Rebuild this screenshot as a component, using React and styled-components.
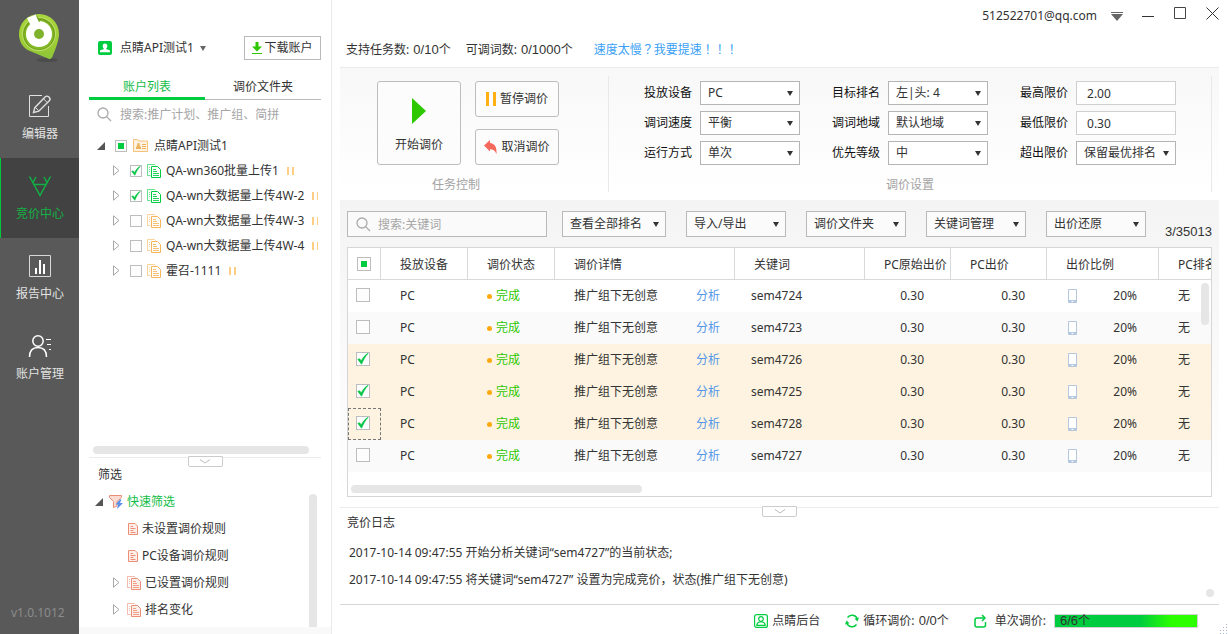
import { useState } from "react";
import styled, { createGlobalStyle } from "styled-components";

const GlobalStyle = createGlobalStyle`
  * {
    box-sizing: border-box;
  }
  body {
    margin: 0;
    background: #fff;
  }
  body, button, input, select {
    font-family: "Noto Sans", "Noto Sans CJK SC", sans-serif;
    font-size: 12px;
    line-height: 16px;
    color: #333;
  }
  button {
    padding: 0;
    border: none;
    background: none;
  }
  a {
    text-decoration: none;
  }
  svg {
    display: block;
    flex: none;
  }
`;

const Window = styled.div`
  display: flex;
  height: 100vh;
  overflow: hidden;
`;

/* ---------- sidebar ---------- */

const Sidebar = styled.nav`
  display: flex;
  flex-direction: column;
  flex: none;
  width: 79px;
  background: #595959;
`;

const LogoBox = styled.div`
  height: 78px;
  padding: 13px 0 0 18px;
`;

const NavButton = styled.button`
  display: flex;
  flex-direction: column;
  align-items: center;
  gap: 8px;
  height: 80px;
  padding: 16px 0 0;
  border-left: 1px solid ${(p) => (p.$active ? "#00c73c" : "transparent")};
  background: ${(p) => (p.$active ? "#424242" : "transparent")};
  color: ${(p) => (p.$active ? "#12b144" : "#e2e2e2")};
`;

const Version = styled.div`
  margin-top: auto;
  padding: 0 0 13px 11px;
  color: #8c8c8c;
`;

/* ---------- account panel ---------- */

const Panel = styled.aside`
  display: flex;
  flex-direction: column;
  flex: none;
  width: 253px;
  border-right: 1px solid #ebebeb;
`;

const PanelBody = styled.div`
  display: flex;
  flex-direction: column;
  flex: 1;
  min-height: 0;
  padding: 0 10px;
`;

const AccountRow = styled.div`
  display: flex;
  align-items: center;
  gap: 8px;
  padding: 36px 0 0 9px;
`;

const AccountButton = styled.button`
  display: flex;
  align-items: center;
  gap: 6px;
  white-space: nowrap;
`;

const DownloadButton = styled.button`
  display: flex;
  align-items: center;
  justify-content: center;
  gap: 2px;
  width: 77px;
  height: 24px;
  margin-left: auto;
  border: 1px solid #b9b9b9;
`;

const Tabs = styled.div`
  display: flex;
  margin-top: 12px;
`;

const Tab = styled.button`
  flex: 1;
  height: 28px;
  padding: 4px 0 ${(p) => (p.$active ? 0 : 2)}px;
  border-bottom: ${(p) => (p.$active ? "3px solid #00cc3f" : "1px solid #bbb")};
  color: ${(p) => (p.$active ? "#12bd48" : "#333")};
`;

const PanelSearch = styled.label`
  display: flex;
  align-items: center;
  gap: 8px;
  height: 28px;
  padding-left: 8px;
`;

const PlainInput = styled.input`
  flex: 1;
  min-width: 0;
  padding: 2px 0 0;
  border: none;
  outline: none;
  background: none;
  &::placeholder {
    color: #a6a6a6;
  }
`;

const Tree = styled.div`
  flex: 1;
  min-height: 0;
  margin-right: 3px;
  padding: 5px 0 0 8px;
  overflow: hidden;
`;

const TreeRow = styled.div`
  display: flex;
  align-items: center;
  gap: ${(p) => (p.$child ? "5px" : "6px")};
  height: 25px;
  padding-left: ${(p) => (p.$child ? "16px" : "0")};
  white-space: nowrap;
`;

const PlanName = styled.span`
  flex: none;
  padding-right: 3px;
`;

const Toggle = styled.button`
  display: flex;
  flex: none;
  justify-content: flex-start;
  width: ${(p) => p.$w || 12}px;
`;

const HScroll = styled.div`
  width: ${(p) => p.$width};
  height: 8px;
  margin: ${(p) => p.$margin};
  flex: none;
  border-radius: 4px;
  background: #e6e6e6;
`;

const Splitter = styled.div`
  display: flex;
  justify-content: center;
  flex: none;
  height: 11px;
  background: linear-gradient(#ebebeb, #ebebeb) 0 1px / 100% 1px no-repeat;
`;

const CollapseButton = styled.button`
  display: grid;
  place-items: center;
  width: 35px;
  height: 11px;
  border: 1px solid #ccc;
  border-radius: 0 0 2px 2px;
  background: #fff;
`;

const FilterTitle = styled.div`
  padding-left: 9px;
`;

const FilterArea = styled.div`
  display: flex;
  align-items: flex-end;
  justify-content: space-between;
  height: 144px;
  padding: 0 4px 0 6px;
`;

const FilterList = styled.div`
  height: 139px;
`;

const FilterRow = styled.div`
  display: flex;
  align-items: center;
  gap: 4px;
  height: 27px;
  padding-left: ${(p) => p.$indent || 0}px;
  color: ${(p) => (p.$on ? "#12bd48" : "#333")};
`;

const VScroll = styled.div`
  width: 8px;
  height: ${(p) => p.$height}px;
  flex: none;
  border-radius: ${(p) => (p.$flat ? "4px 4px 0 0" : "4px")};
  background: #e6e6e6;
`;

const PanelFoot = styled.div`
  flex: none;
  height: 7px;
  background: #f9f9f9;
`;

/* ---------- form parts ---------- */

const CheckBox = styled.label`
  display: grid;
  place-items: center;
  flex: none;
  width: ${(p) => p.$size}px;
  height: ${(p) => p.$size}px;
  input,
  svg,
  span {
    grid-area: 1 / 1;
  }
  input {
    appearance: none;
    width: 100%;
    height: 100%;
    margin: 0;
    border: 1px solid #bdbdbd;
    background: #fdfdfd;
  }
  svg,
  span {
    z-index: 1;
    pointer-events: none;
  }
`;

const PartMark = styled.span`
  width: 6px;
  height: 6px;
  background: #00cc3f;
`;

const Check = ({ state, size = 12, label }) => {
  const [on, setOn] = useState(state === "on");
  return (
    <CheckBox $size={size}>
      <input
        type="checkbox"
        aria-label={label}
        checked={on}
        onChange={() => setOn(!on)}
      />
      {state === "part" && <PartMark />}
      {on && (
        <svg width={size - 2} height={size - 2} viewBox="0 0 10 10">
          <path
            d="M0.700 5.200 2.300 4.900 3.500 6.800C4.800 4 6.500 1.800 9.200 0.300 7 2.800 5.300 5.600 3.800 9.300z"
            fill="#00c441"
            stroke="#00c441"
            strokeWidth=".6"
          />
        </svg>
      )}
    </CheckBox>
  );
};

const SelectBox = styled.div`
  display: grid;
  align-items: center;
  width: 100px;
  height: 24px;
  select,
  svg {
    grid-area: 1 / 1;
  }
  select {
    appearance: none;
    width: 100%;
    height: 24px;
    padding: 0 7px;
    border: 1px solid #b5b5b5;
    border-radius: 0;
    background: #fff;
  }
  svg {
    justify-self: end;
    margin-right: 7px;
    pointer-events: none;
  }
`;

const PriceInput = styled.input`
  width: 100px;
  height: 24px;
  padding: 0 10px;
  border: 1px solid #cfcfcf;
  background: #fff;
`;

/* ---------- main ---------- */

const Main = styled.main`
  display: flex;
  flex-direction: column;
  flex: 1;
  min-width: 0;
  padding-left: 8px;
`;

const TitleBar = styled.header`
  display: flex;
  justify-content: flex-end;
  gap: 19px;
  flex: none;
  height: 34px;
  padding: 7px 9px 0 0;
`;

const UserButton = styled.button`
  display: flex;
  align-items: center;
  gap: 14px;
  height: 18px;
`;

const WinButton = styled.button`
  width: 13px;
  height: 13px;
`;

const Quota = styled.div`
  display: flex;
  gap: 15px;
  flex: none;
  height: 33px;
  padding: 8px 0 0 6px;
`;

const Digits = styled.span`
  padding-left: 1px;
  font-family: "Liberation Sans", sans-serif;
  font-size: 13px;
`;

const SpeedLink = styled.a`
  margin: -1px 0 0 6px;
  color: #3aa0f5;
`;

/* full-width marks that sit in the middle of their square */
const Mark = styled.span`
  font-family: "Noto Sans CJK TC", sans-serif;
`;

const Controls = styled.section`
  display: flex;
  flex: none;
  height: 125px;
  margin-right: 9px;
  padding: 8px 7px 0 0;
  border-top: 1px solid #ebebeb;
  background: linear-gradient(#f8f8f8, #fff);
`;

const TaskGroup = styled.div`
  width: 269px;
  flex: none;
  padding: 5px 0 0 37px;
  border-right: 1px solid #e9e9e9;
`;

const TaskButtons = styled.div`
  display: grid;
  grid-template-columns: 84px 84px;
  grid-template-rows: 36px 36px;
  gap: 12px 14px;
`;

const TaskButton = styled.button`
  display: flex;
  align-items: center;
  justify-content: center;
  gap: 4px;
  border: 1px solid #bdbdbd;
  border-radius: 3px;
  background: #fcfcfc;
`;

const StartButton = styled(TaskButton)`
  grid-row: span 2;
  flex-direction: column;
  gap: 13px;
  padding-top: 4px;
`;

const Caption = styled.div`
  margin-top: 12px;
  padding-right: ${(p) => p.$shift || 0}px;
  text-align: center;
  color: #a3a3a3;
`;

const SettingGroup = styled.div`
  flex: 1;
  padding-top: 5px;
  border-right: 1px solid #e9e9e9;
`;

const SettingGrid = styled.div`
  display: grid;
  grid-template-columns: repeat(3, auto);
  justify-content: center;
  gap: 6px 32px;
`;

const Field = styled.label`
  display: flex;
  align-items: center;
  gap: 8px;
  color: #111;
`;

const Work = styled.section`
  display: flex;
  flex-direction: column;
  flex: 1;
  min-height: 0;
  margin: 8px 9px 0 0;
  padding: 11px 7px 9px;
  background: linear-gradient(#f4f4f4, #fff);
`;

const Toolbar = styled.div`
  display: flex;
  gap: 15px;
  height: 36px;
  flex: none;
`;

const SearchBox = styled.label`
  display: flex;
  align-items: center;
  gap: 7px;
  width: 200px;
  height: 26px;
  padding: 0 8px;
  border: 1px solid #b9b9b9;
  background: #fafafa;
`;

const Menus = styled.div`
  display: flex;
  gap: 20px;
`;

const MenuButton = styled.button`
  display: flex;
  align-items: center;
  justify-content: space-between;
  width: ${(p) => (p.$wide ? 104 : 100)}px;
  height: 26px;
  padding: 0 6px 0 7px;
  border: 1px solid #b9b9b9;
  background: #fbfbfb;
  white-space: nowrap;
`;

const Count = styled.div`
  margin-left: auto;
  padding-top: 13px;
`;

const TableFrame = styled.div`
  display: flex;
  flex-direction: column;
  justify-content: space-between;
  position: relative;
  flex: 1;
  min-height: 0;
  overflow: hidden;
  border: 1px solid #d6d6d6;
  background: #fff;
`;

const Table = styled.table`
  width: 100%;
  table-layout: fixed;
  border-collapse: separate;
  border-spacing: 0;
  th,
  td {
    height: 32px;
    padding: 0 0 0 19px;
    overflow: hidden;
    text-align: left;
    font-weight: normal;
    white-space: nowrap;
  }
  th {
    padding-top: 2px;
    border-right: 1px solid #d9d9d9;
    border-bottom: 1px solid #d9d9d9;
  }
  th:last-child {
    border-right: none;
  }
  th:first-child {
    padding: 0 0 0 9px;
  }
  td:first-child {
    padding: 0 0 2px 8px;
  }
`;

const Col = styled.col`
  width: ${(p) => (p.$w ? `${p.$w}px` : "auto")};
`;

const Row = styled.tr`
  background: ${(p) => (p.$on ? "#fdf3e0" : p.$even ? "#fafafa" : "#fff")};
  td:first-child {
    outline: ${(p) => (p.$focus ? "1px dashed #777" : "none")};
    outline-offset: -1px;
  }
  td:nth-child(5) {
    padding-left: 16px;
  }
  td:nth-child(6) {
    padding: 0 27px 0 0;
    text-align: right;
  }
  td:nth-child(7) {
    padding: 0 22px 0 0;
    text-align: right;
  }
`;

const Split = styled.div`
  display: flex;
  align-items: center;
  justify-content: space-between;
  padding-right: ${(p) => p.$end}px;
  padding-left: ${(p) => p.$start || 0}px;
`;

const Status = styled.span`
  display: flex;
  align-items: center;
  gap: 4px;
  color: #2dc800;
  &::before {
    content: "";
    width: 5px;
    height: 5px;
    border-radius: 50%;
    background: #ffa912;
  }
`;

const TextLink = styled.a`
  color: #5597e8;
`;

const TableScroll = styled(VScroll)`
  position: absolute;
  top: 35px;
  right: 2px;
`;

const Log = styled.section`
  display: flex;
  align-items: flex-end;
  justify-content: space-between;
  flex: none;
  height: 87px;
  padding: 0 5px 7px 7px;
`;

const LogText = styled.div`
  align-self: flex-start;
  p {
    margin: 0;
    padding-left: 2px;
    line-height: 27px;
  }
`;

const LogTitle = styled.div`
  height: 22px;
  line-height: 12px;
`;

const MainLower = styled.div`
  flex: none;
  margin-right: 9px;
  border-bottom: 1px solid #d6d6d6;
`;

const StatusBar = styled.footer`
  display: flex;
  align-items: center;
  justify-content: flex-end;
  gap: 25px;
  flex: none;
  height: 29px;
  padding: 3px 0 0;
`;

const StatusItem = styled.div`
  display: flex;
  align-items: center;
  gap: ${(p) => p.$gap || 4}px;
`;

const Progress = styled.div`
  width: 144px;
  height: 14px;
  padding-left: 4px;
  border: 1px solid #d2d2d2;
  background: linear-gradient(90deg, #00cc3f 60%, #2bff00 82%);
  line-height: 12px;
`;

const Grip = styled.div`
  align-self: flex-end;
  margin-left: -5px;
`;

/* ---------- icons ---------- */

const Caret = ({ w = 6, h = 5, color = "#333" }) => (
  <svg width={w} height={h} viewBox="0 0 6 5">
    <path d="M0 0h6L3 5z" fill={color} />
  </svg>
);

const Logo = () => (
  <svg width="44" height="50" viewBox="0 0 44 50">
    <defs>
      <linearGradient id="pin" x1="0" y1="0" x2="0" y2="1">
        <stop offset="0" stopColor="#a9d63c" />
        <stop offset="0.700" stopColor="#9ccc35" />
        <stop offset="1" stopColor="#8cc63a" />
      </linearGradient>
    </defs>
    <ellipse cx="29" cy="47" rx="11" ry="2" fill="#4c4c4c" />
    <path
      d="M1 21a20 20 0 0 1 40 0c0 6-3 14-6.500 22.500-.9 2.300-2.300 3-4.500 1.900L9.500 37C4 33.500 1 27.500 1 21z"
      fill="url(#pin)"
    />
    <circle cx="21" cy="21" r="17" fill="#c0df6c" />
    <circle cx="21" cy="21" r="16" fill="#72a51c" />
    <circle cx="21" cy="21.500" r="14.500" fill="#86b928" />
    <circle cx="21" cy="21" r="13" fill="#fff" />
    <path d="M9 5 18 1.500 21 9l-8 4z" fill="#fff" />
    <path d="M18.500 2.500 21.500 9" stroke="#72a51c" />
    <circle cx="21" cy="21" r="5" fill="#80b32c" />
  </svg>
);

const EditIcon = () => (
  <svg width="24" height="24" viewBox="0 0 24 24" fill="none" stroke="#e0e0e0">
    <path d="M14 1.500H1.500v21h19V12" />
    <path
      d="M5.500 18.500l1.300-4.800L17.300 2.800a2.300 2.300 0 0 1 3.300 0l.7.7a2.300 2.300 0 0 1 0 3.200L10.800 17.200z"
      strokeWidth="1.400"
    />
    <path d="M15.500 4.800l3.700 3.700M7.500 13.500l3.200 3.200" />
  </svg>
);

const BidIcon = () => (
  <svg width="24" height="24" viewBox="0 0 24 24" fill="none" stroke="#12b144" strokeWidth="1.500">
    <path d="M1.500 2.500 12 21.500 22.500 2.500" />
    <path d="M5 8.500 8 3M19 8.500 16 3M5.500 10.500h13" />
  </svg>
);

const ReportIcon = () => (
  <svg width="24" height="24" viewBox="0 0 24 24">
    <path d="M1.500 1.500h21v21h-21z" fill="none" stroke="#d8d8d8" />
    <path d="M7 14h2v6H7zM11 6h2v14h-2zM15 10h2v10h-2z" fill="#fff" />
  </svg>
);

const UserIcon = () => (
  <svg width="24" height="24" viewBox="0 0 24 24" fill="none" stroke="#fff" strokeWidth="1.500">
    <circle cx="10" cy="7" r="5.200" />
    <path d="M1.500 23c0-6.500 3.500-9.500 8.500-9.500s8.500 3 8.500 9.500" />
    <path d="M18 5.500h5M19 10.500h4M21 15.500h2" strokeWidth="1" />
  </svg>
);

const AvatarIcon = () => (
  <svg width="14" height="14" viewBox="0 0 14 14">
    <rect width="14" height="14" rx="2" fill="#00cc3f" />
    <path
      d="M7 2.500c1.600 0 2.300 1 2.300 2.400 0 1.200-.5 1.900-1 2.500v.8l2.900.9c.6.200.8.500.8 1.200v1H2v-1c0-.7.200-1 .8-1.200l2.900-.9v-.8c-.5-.6-1-1.300-1-2.500 0-1.400.7-2.400 2.300-2.400z"
      fill="#fff"
    />
  </svg>
);

const DownloadIcon = () => (
  <svg width="10" height="12" viewBox="0 0 10 12">
    <path d="M3.500 0h3v4.500H10L5 9.500 0 4.500h3.500zM0 11h10v1H0z" fill="#2dc800" />
  </svg>
);

const SearchIcon = () => (
  <svg width="15" height="15" viewBox="0 0 15 15" fill="none" stroke="#aaa" strokeWidth="1.300">
    <circle cx="6" cy="6" r="5" />
    <path d="M9.600 9.600 14 14" />
  </svg>
);

const OpenArrow = () => (
  <svg width="8" height="8" viewBox="0 0 8 8">
    <path d="M8 0v8H0z" fill="#555" />
  </svg>
);

const ClosedArrow = () => (
  <svg width="7" height="11" viewBox="0 0 7 11">
    <path d="M.5.800 6 5.500.5 10.200z" fill="none" stroke="#a6a6a6" />
  </svg>
);

const FolderIcon = () => (
  <svg width="15" height="13" viewBox="0 0 15 13">
    <path d="M.5 12.500V.5h4l1 1.500h9v10.500z" fill="#fdf3e0" stroke="#f4c27a" />
    <path d="M5.500 4a1.200 1.200 0 0 1 1 2L8 8.500v1.500H3V8.500L4.500 6a1.200 1.200 0 0 1 1-2zM9 5h4v1H9zM9 7h4v1H9zM9 9h4v1H9z" fill="#eeb25f" />
  </svg>
);

const DocsIcon = ({ color, pale = "#fff" }) => (
  <svg width="14" height="14" viewBox="0 0 14 14" fill="none" stroke={color}>
    <path d="M3.500 11.500h-3V.5h7l1 1M2 3.500h1M2 5.500h1M2 7.500h1" opacity=".6" />
    <path d="M4.500 2.500h6l3 3v8h-9z" fill={pale} />
    <path d="M6 5.500h3M6 7.500h4M6 9.500h6M6 11.500h6" opacity=".85" />
  </svg>
);

const DocIcon = () => (
  <svg width="10" height="12" viewBox="0 0 10 12" fill="none" stroke="#ed8f76">
    <path d="M.5.500h6.500l2.500 2.500v8.500h-9z" fill="#fdeee9" />
    <path d="M2.500 3.500H5M2.500 5.500h5M2.500 7.500h3M2.500 9.500h5" />
  </svg>
);

const FunnelIcon = () => (
  <svg width="14" height="14" viewBox="0 0 14 14">
    <path d="M.5.500h12v2L8 6.500V11L4.500 12.500v-6L.5 2.500z" fill="#fbdcd3" stroke="#ed8f76" />
    <path d="M11 4.500 6.500 9.500H9L8 14l6-6h-3l1.500-3.500z" fill="#5b8fe8" />
  </svg>
);

const PauseMark = ({ w = 7, h = 8, bar = 2, color = "#ffce85" }) => (
  <svg width={w} height={h} viewBox={`0 0 ${w} ${h}`} fill={color}>
    <path d={`M0 0h${bar}v${h}H0zM${w - bar} 0h${bar}v${h}h-${bar}z`} />
  </svg>
);

const PlayIcon = () => (
  <svg width="14" height="26" viewBox="0 0 14 26">
    <path d="M0 0l14 13L0 26z" fill="#2dc800" />
  </svg>
);

const UndoIcon = () => (
  <svg width="13" height="14" viewBox="0 0 13 14">
    <path d="M0 5.500 6 0v3c4.500.5 7 3.500 6.500 11C11 10.500 9 9.200 6 9.200V11.500z" fill="#f4695c" />
  </svg>
);

const PhoneIcon = () => (
  <svg width="9" height="14" viewBox="0 0 9 14">
    <rect width="9" height="14" rx="1" fill="#b4c7df" />
    <path d="M1 1h7v10H1z" fill="#fff" />
    <path d="M3.500 12h2v1h-2z" fill="#fff" />
  </svg>
);

const ChevronIcon = () => (
  <svg width="12" height="5" viewBox="0 0 12 5">
    <path d="M1 .5 6 4l5-3.500" fill="none" stroke="#bbb" />
  </svg>
);

const BackendIcon = () => (
  <svg width="14" height="14" viewBox="0 0 14 14" fill="none" stroke="#00cc3f" strokeWidth="1.200">
    <rect x=".6" y=".6" width="12.800" height="12.800" rx="2" />
    <circle cx="7" cy="5" r="2.300" />
    <path d="M2.800 11.400c0-2 1.200-3 2.700-3.400h3c1.500.4 2.700 1.400 2.700 3.400z" />
  </svg>
);

const LoopIcon = () => (
  <svg width="14" height="14" viewBox="0 0 14 14" fill="none" stroke="#00cc3f" strokeWidth="1.500">
    <path d="M2.500 3.500a5.600 5.600 0 0 1 9.800 1.500M11.500 10.500a5.600 5.600 0 0 1-9.800-1.500" />
    <path d="M14 3.500 12.500 7.500 9.500 4.800zM0 10.500 1.500 6.500l3 2.700z" fill="#00cc3f" stroke="none" />
  </svg>
);

const OnceIcon = () => (
  <svg width="13" height="14" viewBox="0 0 13 14" fill="none" stroke="#00cc3f" strokeWidth="1.500">
    <path d="M10.500 4H3a2 2 0 0 0-2 2v5a2 2 0 0 0 2 2h6.500a2 2 0 0 0 2-2V8" />
    <path d="M8 1 11 4 8 7" />
  </svg>
);

const GripIcon = () => (
  <svg width="10" height="10" viewBox="0 0 10 10" fill="#a9b4c4">
    <path d="M8 0h1v1H8zM8 3h1v1H8zM5 3h1v1H5zM8 6h1v1H8zM5 6h1v1H5zM2 6h1v1H2zM8 9h1v1H8zM5 9h1v1H5zM2 9h1v1H2z" />
  </svg>
);

/* ---------- data ---------- */

const nav = [
  { text: "编辑器", icon: <EditIcon /> },
  { text: "竞价中心", icon: <BidIcon />, active: true },
  { text: "报告中心", icon: <ReportIcon /> },
  { text: "账户管理", icon: <UserIcon /> },
];

const plans = [
  { name: "QA-wn360批量上传1", on: true },
  { name: "QA-wn大数据量上传4W-2", on: true },
  { name: "QA-wn大数据量上传4W-3" },
  { name: "QA-wn大数据量上传4W-4" },
  { name: "霍召-1111" },
];

const settings = [
  { label: "投放设备", value: "PC" },
  { label: "目标排名", value: "左|头: 4" },
  { label: "最高限价", value: "2.00", input: true },
  { label: "调词速度", value: "平衡" },
  { label: "调词地域", value: "默认地域" },
  { label: "最低限价", value: "0.30", input: true },
  { label: "运行方式", value: "单次" },
  { label: "优先等级", value: "中" },
  { label: "超出限价", value: "保留最优排名" },
];

const menus = ["查看全部排名", "导入/导出", "调价文件夹", "关键词管理", "出价还原"];

const widths = [33, 87, 87, 180, 130, 86, 96, 112, null];

const heads = [
  "投放设备",
  "调价状态",
  "调价详情",
  "关键词",
  "PC原始出价",
  "PC出价",
  "出价比例",
  "PC排名",
];

const rows = [
  { word: "sem4724" },
  { word: "sem4723" },
  { word: "sem4726", on: true },
  { word: "sem4725", on: true },
  { word: "sem4728", on: true, focus: true },
  { word: "sem4727" },
];

const AccountPanel = () => (
  <Panel>
    <PanelBody>
      <AccountRow>
        <AvatarIcon />
        <AccountButton>
          点睛API测试1 <Caret color="#666" />
        </AccountButton>
        <DownloadButton>
          <DownloadIcon />
          下载账户
        </DownloadButton>
      </AccountRow>
      <Tabs>
        <Tab $active>账户列表</Tab>
        <Tab>调价文件夹</Tab>
      </Tabs>
      <PanelSearch>
        <SearchIcon />
        <PlainInput aria-label="搜索" placeholder="搜索:推广计划、推广组、简拼" />
      </PanelSearch>
      <Tree>
        <TreeRow>
          <Toggle aria-label="收起">
            <OpenArrow />
          </Toggle>
          <Check state="part" label="点睛API测试1" />
          <FolderIcon />
          点睛API测试1
        </TreeRow>
        {plans.map((p) => (
          <TreeRow key={p.name} $child>
            <Toggle aria-label="展开">
              <ClosedArrow />
            </Toggle>
            <Check state={p.on ? "on" : "off"} label={p.name} />
            <DocsIcon color={p.on ? "#00cc3f" : "#f6b65c"} />
            <PlanName>{p.name}</PlanName>
            <PauseMark />
          </TreeRow>
        ))}
      </Tree>
      <HScroll $width="216px" $margin="0 0 2px 4px" />
      <Splitter>
        <CollapseButton aria-label="收起筛选">
          <ChevronIcon />
        </CollapseButton>
      </Splitter>
      <FilterTitle>筛选</FilterTitle>
      <FilterArea>
        <FilterList>
          <FilterRow $on>
            <Toggle $w={10} aria-label="收起">
              <OpenArrow />
            </Toggle>
            <FunnelIcon />
            快速筛选
          </FilterRow>
          <FilterRow $indent={33}>
            <DocIcon />
            未设置调价规则
          </FilterRow>
          <FilterRow $indent={33}>
            <DocIcon />
            PC设备调价规则
          </FilterRow>
          {["已设置调价规则", "排名变化"].map((t) => (
            <FilterRow key={t} $indent={18}>
              <Toggle $w={10} aria-label="展开">
                <ClosedArrow />
              </Toggle>
              <DocsIcon color="#ed8f76" pale="#fdeee9" />
              {t}
            </FilterRow>
          ))}
        </FilterList>
        <VScroll $height={133} $flat />
      </FilterArea>
    </PanelBody>
    <PanelFoot />
  </Panel>
);

const KeywordTable = () => (
  <TableFrame>
    <Table>
      <colgroup>
        {widths.map((w, i) => (
          <Col key={i} $w={w} />
        ))}
      </colgroup>
      <thead>
        <tr>
          <th>
            <Check state="part" size={14} label="全选" />
          </th>
          {heads.map((h) => (
            <th key={h}>{h}</th>
          ))}
        </tr>
      </thead>
      <tbody>
        {rows.map((r, i) => (
          <Row key={r.word} $on={r.on} $even={i % 2 === 1} $focus={r.focus}>
            <td>
              <Check state={r.on ? "on" : "off"} size={14} label={r.word} />
            </td>
            <td>PC</td>
            <td>
              <Status>完成</Status>
            </td>
            <td>
              <Split $end={15}>
                推广组下无创意 <TextLink href="#">分析</TextLink>
              </Split>
            </td>
            <td>{r.word}</td>
            <td>0.30</td>
            <td>0.30</td>
            <td>
              <Split $start={2} $end={22}>
                <PhoneIcon /> 20%
              </Split>
            </td>
            <td>无</td>
          </Row>
        ))}
      </tbody>
    </Table>
    <TableScroll $height={42} />
    <HScroll $width="291px" $margin="0 0 3px 3px" />
  </TableFrame>
);

const App = () => {
  return (
    <Window lang="zh-CN">
      <GlobalStyle />
      <Sidebar>
        <LogoBox>
          <Logo />
        </LogoBox>
        {nav.map((n) => (
          <NavButton key={n.text} $active={n.active}>
            {n.icon}
            {n.text}
          </NavButton>
        ))}
        <Version>v1.0.1012</Version>
      </Sidebar>

      <AccountPanel />

      <Main>
        <TitleBar>
          <UserButton>
            512522701@qq.com
            <svg width="12" height="9" viewBox="0 0 12 9">
              <path d="M0 0h12v1H0zM0 2h12L6 9z" fill="#666" />
            </svg>
          </UserButton>
          <WinButton aria-label="最小化">
            <svg width="13" height="13" viewBox="0 0 13 13">
              <path d="M0 9.500h12" stroke="#333" />
            </svg>
          </WinButton>
          <WinButton aria-label="最大化">
            <svg width="13" height="13" viewBox="0 0 13 13">
              <path d="M.5.500h11v11H.5z" fill="none" stroke="#444" />
            </svg>
          </WinButton>
          <WinButton aria-label="关闭">
            <svg width="13" height="13" viewBox="0 0 13 13">
              <path d="M.5.500l12 12M12.500.5l-12 12" stroke="#333" />
            </svg>
          </WinButton>
        </TitleBar>

        <Quota>
          <span>
            支持任务数: <Digits>0/10</Digits>个
          </span>
          <span>
            可调词数: <Digits>0/1000</Digits>个
          </span>
          <SpeedLink href="#">
            速度太慢<Mark lang="zh-TW">？</Mark>我要提速
            <Mark lang="zh-TW">！！！</Mark>
          </SpeedLink>
        </Quota>

        <Controls>
          <TaskGroup>
            <TaskButtons>
              <StartButton>
                <PlayIcon />
                开始调价
              </StartButton>
              <TaskButton>
                <PauseMark w={10} h={14} bar={3} color="#ffb012" />
                暂停调价
              </TaskButton>
              <TaskButton>
                <UndoIcon />
                取消调价
              </TaskButton>
            </TaskButtons>
            <Caption $shift={73}>任务控制</Caption>
          </TaskGroup>
          <SettingGroup>
            <SettingGrid>
              {settings.map((s) => (
                <Field key={s.label}>
                  {s.label}
                  {s.input ? (
                    <PriceInput defaultValue={s.value} />
                  ) : (
                    <SelectBox>
                      <select>
                        <option>{s.value}</option>
                      </select>
                      <Caret />
                    </SelectBox>
                  )}
                </Field>
              ))}
            </SettingGrid>
            <Caption>调价设置</Caption>
          </SettingGroup>
        </Controls>

        <Work>
          <Toolbar>
            <SearchBox>
              <SearchIcon />
              <PlainInput aria-label="搜索关键词" placeholder="搜索:关键词" />
            </SearchBox>
            <Menus>
              {menus.map((m, i) => (
                <MenuButton key={m} $wide={i === 0} aria-haspopup="menu">
                  {m} <Caret />
                </MenuButton>
              ))}
            </Menus>
            <Count>
              <Digits>3/35013</Digits>
            </Count>
          </Toolbar>
          <KeywordTable />
        </Work>

        <MainLower>
          <Splitter>
            <CollapseButton aria-label="收起日志">
              <ChevronIcon />
            </CollapseButton>
          </Splitter>
          <Log>
            <LogText>
              <LogTitle>竞价日志</LogTitle>
              <p>2017-10-14 09:47:55 开始分析关键词“sem4727”的当前状态;</p>
              <p>
                2017-10-14 09:47:55 将关键词“sem4727” 设置为完成竞价，状态(推广组下无创意)
              </p>
            </LogText>
            <VScroll $height={8} />
          </Log>
        </MainLower>

        <StatusBar>
          <StatusItem>
            <BackendIcon />
            点睛后台
          </StatusItem>
          <StatusItem>
            <LoopIcon />
            <span>
              循环调价: <Digits>0/0</Digits>个
            </span>
          </StatusItem>
          <StatusItem $gap={8}>
            <OnceIcon />
            <span>单次调价:</span>
            <Progress role="progressbar" aria-valuenow={6} aria-valuemax={6}>
              <Digits>6/6</Digits>个
            </Progress>
          </StatusItem>
          <Grip>
            <GripIcon />
          </Grip>
        </StatusBar>
      </Main>
    </Window>
  );
};

export default App;
